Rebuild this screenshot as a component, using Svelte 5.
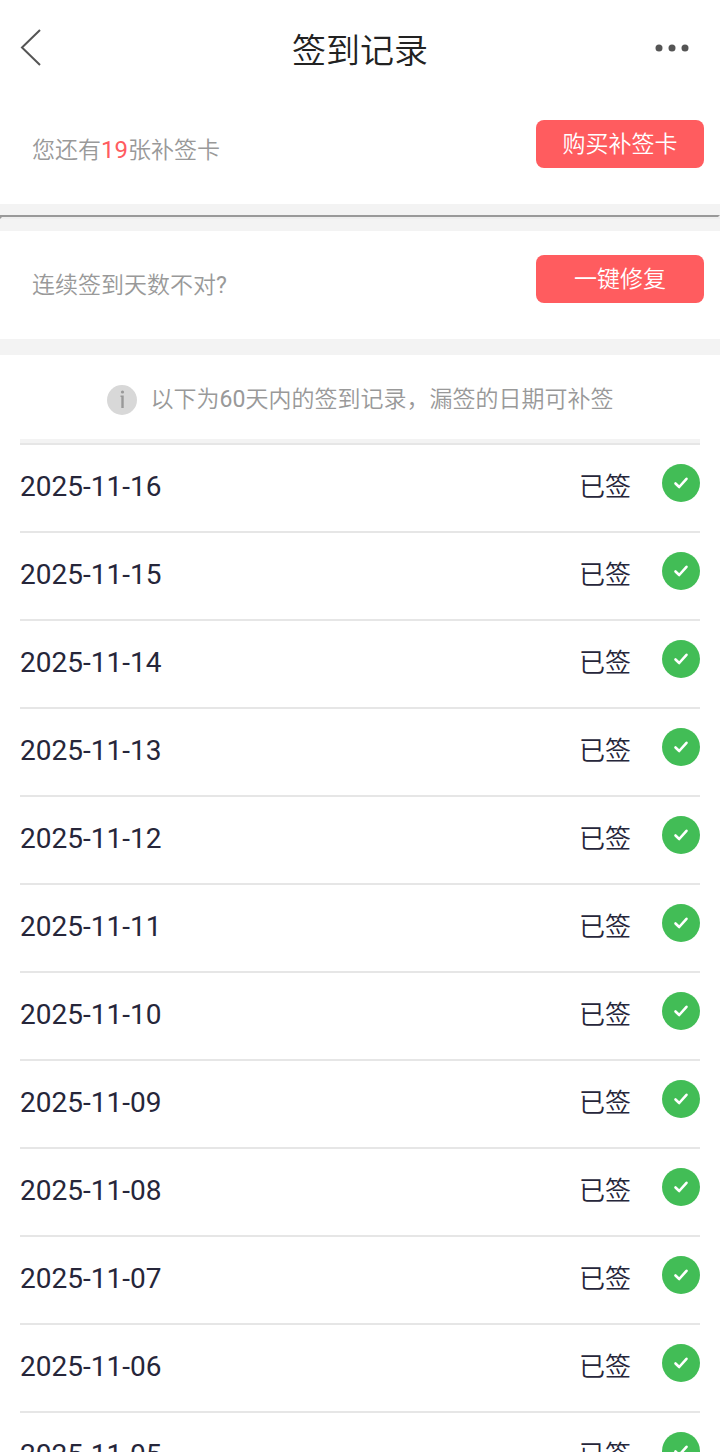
<script lang="ts">
  let cards = 19;
  let days = 60;
  const records = [
    "2025-11-16",
    "2025-11-15",
    "2025-11-14",
    "2025-11-13",
    "2025-11-12",
    "2025-11-11",
    "2025-11-10",
    "2025-11-09",
    "2025-11-08",
    "2025-11-07",
    "2025-11-06",
    "2025-11-05",
  ];
</script>

<style>
  :global(body) {
    margin: 0;
    background: #fff;
  }

  .page {
    display: flex;
    flex-direction: column;
    height: 100vh;
    overflow: hidden;
    font-family: Roboto, "Noto Sans CJK SC DemiLight", "Noto Sans CJK SC", sans-serif;
    color: #999;
  }

  button {
    border: 0;
    padding: 0;
    background: none;
    font: inherit;
    cursor: pointer;
  }

  header {
    display: grid;
    grid-template-columns: 60px 1fr 60px;
    align-items: center;
    flex: none;
    height: 96px;
    padding: 0 18px 0 4px;
  }

  header button {
    display: flex;
    justify-content: center;
  }

  h1 {
    margin: 0 0 0 14px;
    padding-top: 5px;
    font-size: 34px;
    line-height: 48px;
    font-weight: 400;
    text-align: center;
    color: #222;
  }

  .bar {
    display: flex;
    justify-content: space-between;
    align-items: flex-start;
    flex: none;
    height: 84px;
    padding: 24px 16px 0 32px;
    font-size: 23px;
  }

  .bar p {
    margin: 0;
    line-height: 61px;
  }

  .bar em {
    font-size: 24px;
    font-style: normal;
    color: #ff5c5f;
  }

  .bar button {
    width: 168px;
    height: 48px;
    line-height: 50px;
    border-radius: 8px;
    background: #ff5c5f;
    color: #fff;
  }

  .gap {
    flex: none;
    background: #f3f3f3;
    padding: 11px 0 12px;
  }

  .gap.plain {
    padding: 8px 0;
  }

  hr {
    margin: 0;
    border: 2px solid;
    border-color: #999 #eee #eee #999;
  }

  .tip {
    display: flex;
    justify-content: center;
    align-items: center;
    gap: 14px;
    flex: none;
    height: 78px;
    padding-top: 6px;
    font-size: 23px;
  }

  .tip p {
    margin: 0;
    line-height: 32px;
  }

  ul {
    flex: 1;
    min-height: 0;
    margin: 0 20px;
    padding: 0;
    border-top: 4px solid #f3f3f3;
    overflow-y: auto;
    scrollbar-width: none;
    list-style: none;
  }

  li {
    display: flex;
    align-items: flex-start;
    border-top: 2px solid #e6e6e6;
    height: 86px;
    color: #26263a;
  }

  time {
    flex: 1;
    font-size: 28px;
    line-height: 84px;
  }

  .state {
    font-size: 26px;
    line-height: 84px;
    margin-right: 31px;
  }

  .check {
    margin-top: 19px;
  }

  svg {
    display: block;
  }
</style>

<div class="page">
  <header>
    <button aria-label="返回">
      <svg width="28" height="40" viewBox="0 0 28 40" fill="none" stroke="#555" stroke-width="2">
        <path d="M20 2 L2 19.500 L20 37" />
      </svg>
    </button>
    <h1>签到记录</h1>
    <button aria-label="更多">
      <svg width="36" height="8" viewBox="0 0 36 8" fill="#555">
        <circle cx="5" cy="4" r="3.500" />
        <circle cx="18" cy="4" r="3.500" />
        <circle cx="31" cy="4" r="3.500" />
      </svg>
    </button>
  </header>

  <section class="bar">
    <p>您还有<em>{cards}</em>张补签卡</p>
    <button>购买补签卡</button>
  </section>
  <div class="gap"><hr /></div>
  <section class="bar">
    <p>连续签到天数不对?</p>
    <button>一键修复</button>
  </section>
  <div class="gap plain"></div>

  <div class="tip">
    <svg width="30" height="30" viewBox="0 0 30 30">
      <circle cx="15" cy="15" r="15" fill="#d8d8d8" />
      <circle cx="15.500" cy="7" r="1.600" fill="#999" />
      <path d="M13.500 10.500 H16.700 V23 H14.300 V12 H13.500 Z" fill="#999" />
    </svg>
    <p>以下为{days}天内的签到记录，漏签的日期可补签</p>
  </div>

  <ul>
    {#each records as date}
      <li>
        <time datetime={date}>{date}</time>
        <span class="state">已签</span>
        <svg class="check" width="38" height="38" viewBox="0 0 38 38">
          <circle cx="19" cy="19" r="19" fill="#42bd56" />
          <path d="M13.500 19.500 L17.200 23 L24.500 14.800" fill="none" stroke="#fff" stroke-width="2.600" stroke-linecap="round" stroke-linejoin="round" />
        </svg>
      </li>
    {/each}
  </ul>
</div>
